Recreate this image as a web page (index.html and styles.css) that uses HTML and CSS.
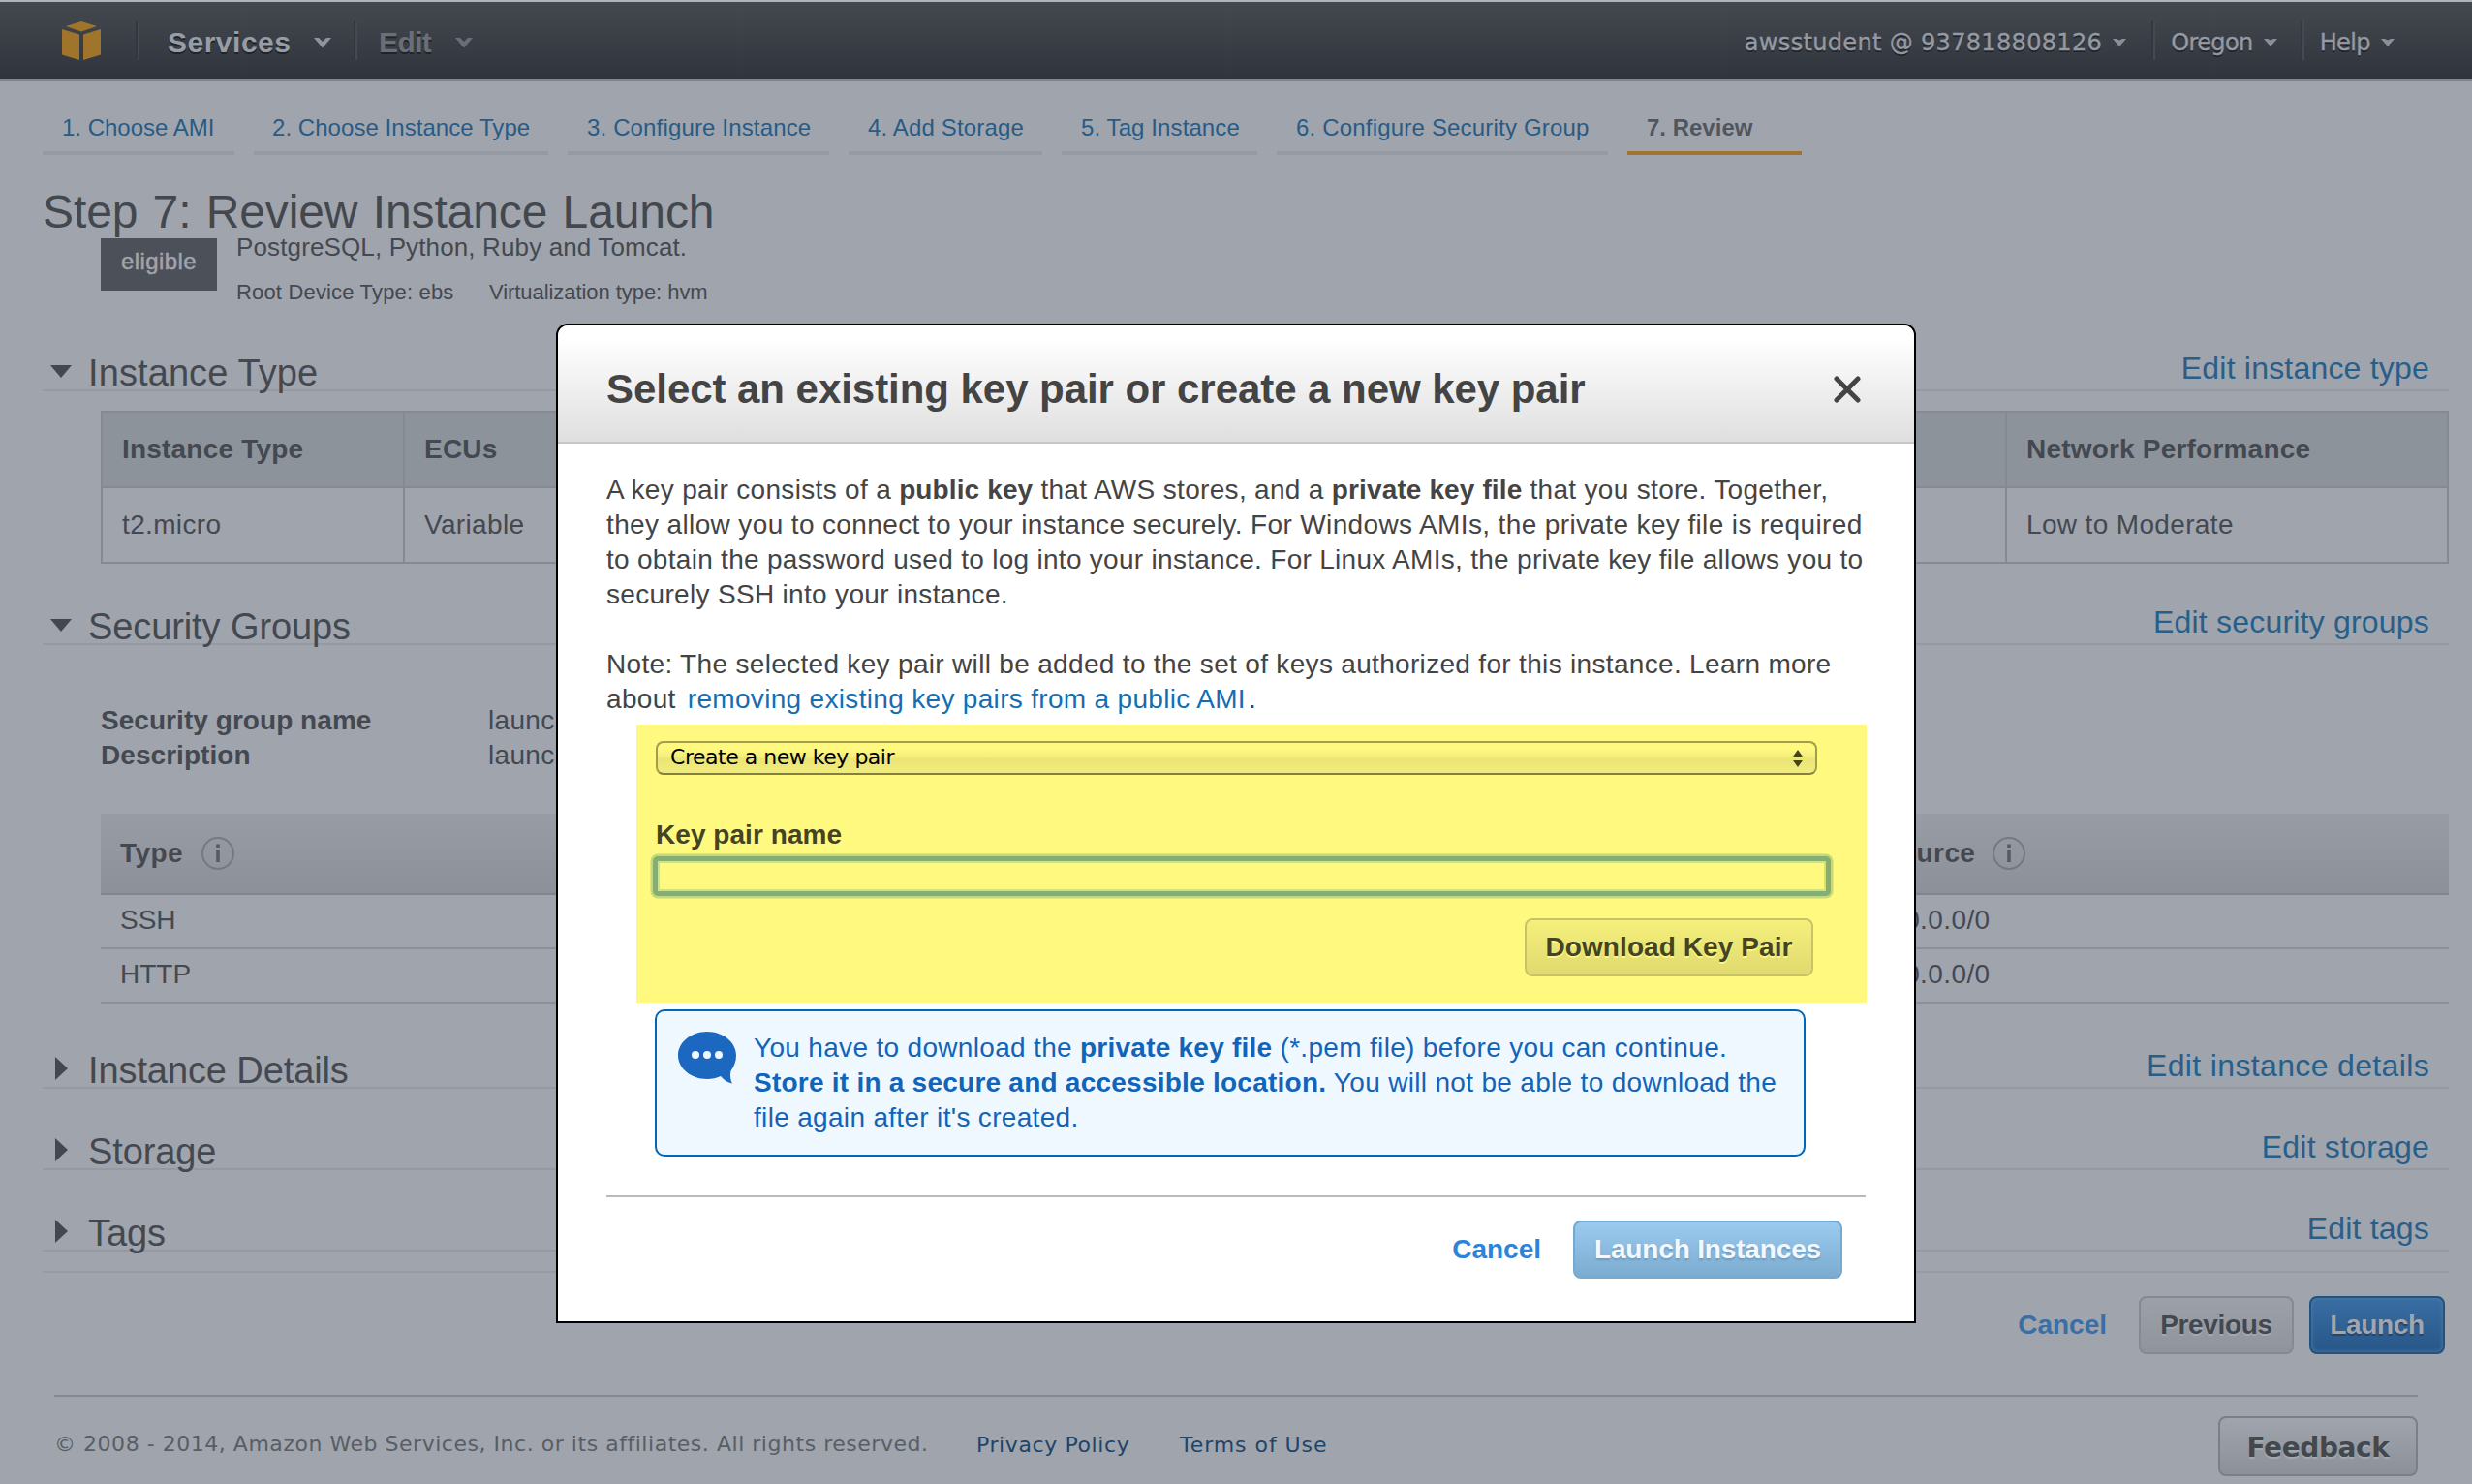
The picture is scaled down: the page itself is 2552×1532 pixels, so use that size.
FILE: index.html
```html
<!DOCTYPE html>
<html lang="en">
<head>
<meta charset="utf-8">
<title>EC2 Management Console</title>
<link rel="stylesheet" href="styles.css">
</head>
<body>
<div class="page">
  <header class="topbar">
    <svg class="logo" width="40" height="40" viewBox="0 0 40 40"><path d="M4 5 20 0 36 5 20 10.500zM0 8 18 13.500V40L0 34.500zM40 8 22 13.500V40L40 34.500z"/></svg>
    <span class="sep sep-logo"></span>
    <a class="menu services">Services</a>
    <svg class="chev chev-services" width="18" height="11" viewBox="0 0 18 11"><path d="M0 0H5L9 4 13 0H18L9 10.500z"/></svg>
    <span class="sep sep-edit"></span>
    <a class="menu edit">Edit</a>
    <svg class="chev chev-edit" width="18" height="11" viewBox="0 0 18 11"><path d="M0 0H5L9 4 13 0H18L9 10.500z"/></svg>
    <nav class="account">
      <a class="acct user">awsstudent @ 937818808126</a>
      <svg class="caret" width="14" height="8" viewBox="0 0 14 8"><path d="M0 0H4L7 1.500 10 0H14L7 8z"/></svg>
      <span class="sep"></span>
      <a class="acct region">Oregon</a>
      <svg class="caret" width="14" height="8" viewBox="0 0 14 8"><path d="M0 0H4L7 1.500 10 0H14L7 8z"/></svg>
      <span class="sep"></span>
      <a class="acct help">Help</a>
      <svg class="caret" width="14" height="8" viewBox="0 0 14 8"><path d="M0 0H4L7 1.500 10 0H14L7 8z"/></svg>
    </nav>
  </header>

  <nav class="steps">
    <a class="step s1">1. Choose AMI</a>
    <a class="step s2">2. Choose Instance Type</a>
    <a class="step s3">3. Configure Instance</a>
    <a class="step s4">4. Add Storage</a>
    <a class="step s5">5. Tag Instance</a>
    <a class="step s6">6. Configure Security Group</a>
    <a class="step s7 active">7. Review</a>
  </nav>

  <main class="content">
    <h1>Step 7: Review Instance Launch</h1>
    <div class="ami">
      <div class="badge">eligible</div>
      <div class="ami-info">
        <p class="ami-desc">PostgreSQL, Python, Ruby and Tomcat.</p>
        <p class="ami-meta"><span class="root">Root Device Type: ebs</span><span class="virt">Virtualization type: hvm</span></p>
      </div>
    </div>

    <div class="sec-head">
      <svg class="tri" width="22" height="13" viewBox="0 0 22 13"><path d="M0 0H22L11 13z"/></svg>
      <h2>Instance Type</h2><a class="edit-link">Edit instance type</a>
    </div>
    <div class="type-table">
      <div class="th">Instance Type</div><div class="th">ECUs</div><div class="th">Network Performance</div>
      <div class="td">t2.micro</div><div class="td">Variable</div><div class="td">Low to Moderate</div>
    </div>

    <div class="sec-head sg">
      <svg class="tri" width="22" height="13" viewBox="0 0 22 13"><path d="M0 0H22L11 13z"/></svg>
      <h2>Security Groups</h2><a class="edit-link">Edit security groups</a>
    </div>
    <dl class="sg-info">
      <dt>Security group name</dt><dd>launch-wizard-1</dd>
      <dt>Description</dt><dd>launch-wizard-1</dd>
    </dl>
    <div class="rules">
      <div class="rule head"><span class="c1">Type
        <svg class="info" width="36" height="36" viewBox="0 0 36 36"><circle cx="18" cy="18" r="16"/><path d="M16.200 8.500h3.600v3.500h-3.600zM16.200 14h3.600v13h-3.600z"/></svg></span>
        <span class="c2">Source
        <svg class="info" width="36" height="36" viewBox="0 0 36 36"><circle cx="18" cy="18" r="16"/><path d="M16.200 8.500h3.600v3.500h-3.600zM16.200 14h3.600v13h-3.600z"/></svg></span></div>
      <div class="rule"><span class="c1">SSH</span><span class="c2">0.0.0.0/0</span></div>
      <div class="rule"><span class="c1">HTTP</span><span class="c2">0.0.0.0/0</span></div>
    </div>

    <div class="sec-head first-closed">
      <svg class="tri closed" width="13" height="24" viewBox="0 0 13 24"><path d="M0 0 13 12 0 24z"/></svg>
      <h2>Instance Details</h2><a class="edit-link details">Edit instance details</a>
    </div>
    <div class="sec-head">
      <svg class="tri closed" width="13" height="24" viewBox="0 0 13 24"><path d="M0 0 13 12 0 24z"/></svg>
      <h2>Storage</h2><a class="edit-link">Edit storage</a>
    </div>
    <div class="sec-head">
      <svg class="tri closed" width="13" height="24" viewBox="0 0 13 24"><path d="M0 0 13 12 0 24z"/></svg>
      <h2>Tags</h2><a class="edit-link">Edit tags</a>
    </div>
    <div class="actions">
      <a class="cancel">Cancel</a>
      <button class="btn previous">Previous</button>
      <button class="btn launch">Launch</button>
    </div>
  </main>

  <footer class="footer">
    <span class="copy">© 2008 - 2014, Amazon Web Services, Inc. or its affiliates. All rights reserved.</span>
    <a class="privacy">Privacy Policy</a>
    <a class="terms">Terms of Use</a>
    <button class="feedback">Feedback</button>
  </footer>

  <section class="modal">
    <div class="modal-head">
      <h3>Select an existing key pair or create a new key pair</h3>
      <svg class="close" width="30" height="28" viewBox="0 0 30 28"><path d="M4 3 26 25M26 3 4 25"/></svg>
    </div>
    <div class="modal-body">
      <p>A key pair consists of a <b>public key</b> that AWS stores, and a <b>private key file</b> that you store. Together,<br>
        <span class="wide">they allow you to connect to your instance securely. For Windows AMIs, the private key file is required</span><br>
        <span class="tight">to obtain the password used to log into your instance. For Linux AMIs, the private key file allows you to</span><br>
        securely SSH into your instance.</p>
      <p>Note: The selected key pair will be added to the set of keys authorized for this instance. Learn more<br>
        about <a class="learn">removing existing key pairs from a public AMI</a>.</p>
      <div class="form">
        <div class="select">Create a new key pair
          <svg width="10" height="18" viewBox="0 0 10 18"><path d="M5 0 10 7H0zM5 18 10 11H0z"/></svg></div>
        <label for="key-name">Key pair name</label>
        <input id="key-name" type="text">
        <button class="btn download">Download Key Pair</button>
      </div>
      <div class="note">
        <svg width="62" height="56" viewBox="0 0 62 56"><path class="bubble" d="M31 1C14.500 1 1 12 1 25.500S14.500 50 31 50c5 0 10-1 14-3 3.500 4 7 6.500 12 7.500-2-3.500-2.500-8-1.500-13C59 37 61 31.500 61 25.500 61 12 47.500 1 31 1z"/><circle cx="19" cy="25" r="4"/><circle cx="31" cy="25" r="4"/><circle cx="43" cy="25" r="4"/></svg>
        <p>You have to download the <b>private key file</b> (*.pem file) before you can continue.<br>
          <b>Store it in a secure and accessible location.</b> You will not be able to download the<br>
          file again after it's created.</p>
      </div>
    </div>
    <div class="modal-foot">
      <a class="cancel">Cancel</a>
      <button class="btn launch-instances">Launch Instances</button>
    </div>
  </section>
</div>
</body>
</html>
```

FILE: styles.css
```css
* { box-sizing: border-box; }
body, h1, h2, h3, p, dl, dd { margin: 0; }
body { background: #a0a4ac; color: #444951; font-family: "Liberation Sans", Arial, sans-serif; font-size: 28px; line-height: 36px; }
svg { display: block; flex: none; }
button { font-family: inherit; cursor: pointer; }
.page { position: relative; width: 2552px; height: 1532px; overflow: hidden; white-space: nowrap; }

/* top navigation */
.topbar { display: flex; align-items: center; height: 84px; padding: 0 80px 0 64px; border-top: 2px solid #b3b4b8; border-bottom: 2px solid #80868f; background: linear-gradient(#444950, #30343c); }
.logo { fill: #a0742b; }
.sep { width: 4px; height: 40px; border-left: 2px solid #33373f; border-right: 2px solid #454a52; }
.sep-logo { margin-left: 36px; }
.menu { font-size: 30px; font-weight: bold; line-height: 40px; color: #989ca5; text-shadow: 0 2px 0 #1f2429; padding-top: 4px; }
.services { margin-left: 29px; width: 151px; letter-spacing: .5px; }
.chev { fill: #8f949d; margin-top: 4px; }
.sep-edit { margin-left: 23px; }
.edit { margin-left: 22px; width: 79px; color: #6a6f77; letter-spacing: -.6px; }
.chev-edit { fill: #6a6f77; }
.account { display: flex; align-items: center; margin-left: auto; }
.acct { font-family: "DejaVu Sans", Verdana, sans-serif; font-size: 24px; line-height: 40px; color: #9599a2; text-shadow: 0 2px 0 #1f2429; padding-top: 4px; -webkit-text-stroke: .4px #9599a2; }
.user { letter-spacing: .33px; }
.caret { fill: #8a8f98; margin: 4px 26px 0 11px; }
.account .caret:last-child { margin-right: 0; }
.region, .help { letter-spacing: -.6px; margin-left: 16px; }
.region + .caret { margin-left: 11px; margin-right: 24px; }

/* wizard steps */
.steps { display: flex; gap: 20px; padding-left: 44px; }
.step { height: 76px; padding: 28px 0 0 20px; border-bottom: 4px solid #969aa3; font-size: 24px; line-height: 40px; color: #285b86; }
.s1 { width: 198px; }
.s2 { width: 304px; padding-left: 19px; letter-spacing: .05px; }
.s3 { width: 270px; letter-spacing: .15px; }
.s4 { width: 200px; letter-spacing: .15px; }
.s5 { width: 202px; letter-spacing: .1px; }
.s6 { width: 342px; letter-spacing: .19px; }
.s7 { width: 180px; }
.step.active { color: #50565e; font-weight: bold; border-color: #a0742f; }

.content { padding: 0 24px 0 44px; }
h1 { margin-top: 31px; font-size: 48px; font-weight: normal; line-height: 56px; color: #43484f; letter-spacing: -.1px; word-spacing: 2px; }
.ami { display: flex; gap: 20px; height: 104px; margin-top: -1px; padding-left: 60px; overflow: hidden; }
.badge { width: 120px; height: 54px; padding-top: 9px; background: #4c5058; color: #a0a4ac; font-size: 24px; line-height: 30px; text-align: center; letter-spacing: .4px; -webkit-text-stroke: .5px #a0a4ac; }
.ami-desc { margin-top: -9px; font-size: 26px; letter-spacing: .13px; }
.ami-meta { display: flex; margin-top: 14px; font-size: 22px; line-height: 30px; }
.root { width: 261px; letter-spacing: .17px; }
.virt { letter-spacing: -.06px; }

/* collapsible sections */
.sec-head { display: flex; align-items: flex-start; height: 54px; margin-top: 30px; border-bottom: 2px solid #959aa2; }
.ami + .sec-head { margin-top: 0; }
.sec-head.first-closed { margin-top: 34px; }
.tri { fill: #43484f; margin: 27px 17px 0 8px; }
.tri.closed { margin: 21px 21px 0 13px; }
h2 { margin-top: 15px; font-size: 38px; font-weight: normal; line-height: 40px; letter-spacing: .1px; }
.type-table ~ .sec-head h2 { letter-spacing: -.1px; }
.edit-link { margin: 10px 20px 0 auto; font-size: 32px; line-height: 40px; color: #285f8a; letter-spacing: .2px; }
.details { letter-spacing: .35px; }

.type-table { display: grid; grid-template-columns: 310px 1fr 456px; margin: 20px 0 0 60px; border: 2px solid #858a92; letter-spacing: .35px; }
.th, .td { padding: 20px 0 0 20px; height: 76px; border-left: 2px solid #858a92; }
.th { background: #8c939b; font-weight: bold; letter-spacing: .2px; }
.td { height: 78px; border-top: 2px solid #858a92; }
.th:nth-child(3n+1), .td:nth-child(3n+1) { border-left: 0; }

.sg-info { display: grid; grid-template-columns: 400px 1fr; margin: 60px 0 0 60px; letter-spacing: .3px; }
.sg-info dt { font-weight: bold; letter-spacing: .05px; }
.sg-info dd { width: 70px; overflow: hidden; }
.rules { margin: 42px 0 0 60px; }
.rule { display: flex; align-items: center; height: 56px; padding: 0 0 2px 20px; border-bottom: 2px solid #8c9199; }
.rule.head { height: 84px; padding-bottom: 0; font-weight: bold; border-color: #80858d; background: linear-gradient(#989ca5, #8c9099); letter-spacing: .4px; }
.rule .c1 { display: flex; width: 1818px; gap: 18px; }
.rule .c2 { display: flex; gap: 17px; letter-spacing: .4px; }
.info circle { fill: none; stroke: #747982; stroke-width: 2; }
.info path { fill: #565b63; }

/* page actions */
.actions { display: flex; align-items: center; justify-content: flex-end; height: 86px; margin-top: 20px; padding: 24px 4px 0 0; border-top: 2px solid #969aa3; }
.btn { height: 60px; padding: 0; border: 2px solid #858a92; border-radius: 8px; font-size: 28px; font-weight: bold; line-height: 36px; }
.cancel { font-weight: bold; color: #3a6ea5; }
.actions .cancel { margin-right: 33px; }
.previous { width: 160px; margin-right: 16px; color: #43484f; letter-spacing: -.35px; background: linear-gradient(#9ca0a9, #90949d); text-shadow: 0 2px 0 #a4a8b0; }
.launch { width: 140px; color: #a0a6b0; letter-spacing: -.35px; border-color: #23527f; background: linear-gradient(#396da2, #285788); box-shadow: inset 0 0 4px #5180ab; text-shadow: 0 2px 1px #21456b; }

.footer { display: flex; align-items: center; height: 84px; margin: 42px 56px 0; padding-top: 20px; border-top: 2px solid #858a92; font-family: "DejaVu Sans", Verdana, sans-serif; font-size: 22px; line-height: 30px; }
.copy { width: 952px; padding-bottom: 5px; color: #585e65; letter-spacing: .53px; }
.privacy, .terms { padding-bottom: 3px; color: #1f4469; letter-spacing: .6px; }
.privacy { width: 210px; }
.terms { letter-spacing: .95px; }
.feedback { width: 206px; height: 62px; margin-left: auto; padding: 2px 0 0; border: 2px solid #7b8088; border-radius: 8px; background: linear-gradient(#a0a4ac, #8c9099); color: #43484f; font-size: 28px; font-weight: bold; letter-spacing: -.4px; text-shadow: 0 2px 0 #a4a8b0; }

/* key pair dialog */
.modal { position: absolute; left: 574px; top: 334px; width: 1404px; height: 1032px; border: 2px solid #000; border-radius: 12px 12px 0 0; background: #fff; color: #444; letter-spacing: .32px; }
.modal-head { display: flex; align-items: center; justify-content: space-between; height: 122px; padding: 11px 54px 0 50px; border-bottom: 2px solid #c8c8c8; border-radius: 10px 10px 0 0; background: linear-gradient(#fff 10%, #dfdfdf); }
h3 { font-size: 42px; line-height: 48px; letter-spacing: -.05px; }
.close { stroke: #444; stroke-width: 5; stroke-linecap: round; }
.modal-body { padding: 30px 50px 0; }
.modal-body > p + p { margin-top: 36px; }
.wide { letter-spacing: .37px; }
.tight { letter-spacing: .29px; }
.modal b { letter-spacing: .12px; }
.learn { margin: 0 3px 0 4px; color: #146eb4; }
.form { display: flex; flex-direction: column; height: 287px; margin: 8px -1px 0 31px; padding: 17px 52px 0 20px; background: #fff980; }
.select { display: flex; align-items: center; justify-content: space-between; width: 1199px; height: 35px; padding: 0 13px 2px 13px; border: 2px solid #a39d50; border-bottom-color: #858040; border-radius: 8px; background: linear-gradient(#fff980 20%, #f3ed7b 48%, #ebe575 52%, #f2ec7c); color: #000; font: 22px/30px "DejaVu Sans", "Lucida Grande", sans-serif; letter-spacing: -.48px; }
.select svg { fill: #444322; margin-top: 2px; }
label { margin-top: 44px; font-weight: bold; line-height: 36px; letter-spacing: .05px; color: #444322; }
#key-name { width: 1216px; height: 41px; margin: 4px 0 0 -3px; padding: 0; border: 5px solid #86ae70; border-radius: 5px; outline: 0; background: #fff980; box-shadow: 0 0 0 2.5px #c9d877, inset 0 0 0 2px #d4e07a; }
.download { width: 298px; margin: 23px 3px 0 auto; align-self: flex-end; border-color: #c9c367; background: linear-gradient(#f5ef7b, #e0da70); color: #444322; letter-spacing: .08px; text-shadow: 0 2px 0 #fdf77f; }
.note { display: flex; align-items: flex-start; width: 1188px; height: 152px; margin: 7px 0 0 50px; padding: 20px 0 0 21px; gap: 17px; border: 2px solid #0066b8; border-radius: 10px; background: #f0f8ff; color: #1264b8; }
.note b { letter-spacing: .24px; }
.note .bubble { fill: #1c68c0; }
.note circle { fill: #f0f8ff; }
.modal-foot { display: flex; align-items: center; justify-content: flex-end; margin: 40px 50px 0; padding: 24px 24px 0 0; border-top: 2px solid #b9b9b9; }
.modal-foot .cancel { margin-right: 33px; color: #2e82da; letter-spacing: 0; }
.launch-instances { width: 278px; border-color: #74aad1; background: linear-gradient(#9acbef, #7cabd0); color: #f2f8fd; letter-spacing: -.16px; text-shadow: 0 2px 2px #6b9cc2; }
```
